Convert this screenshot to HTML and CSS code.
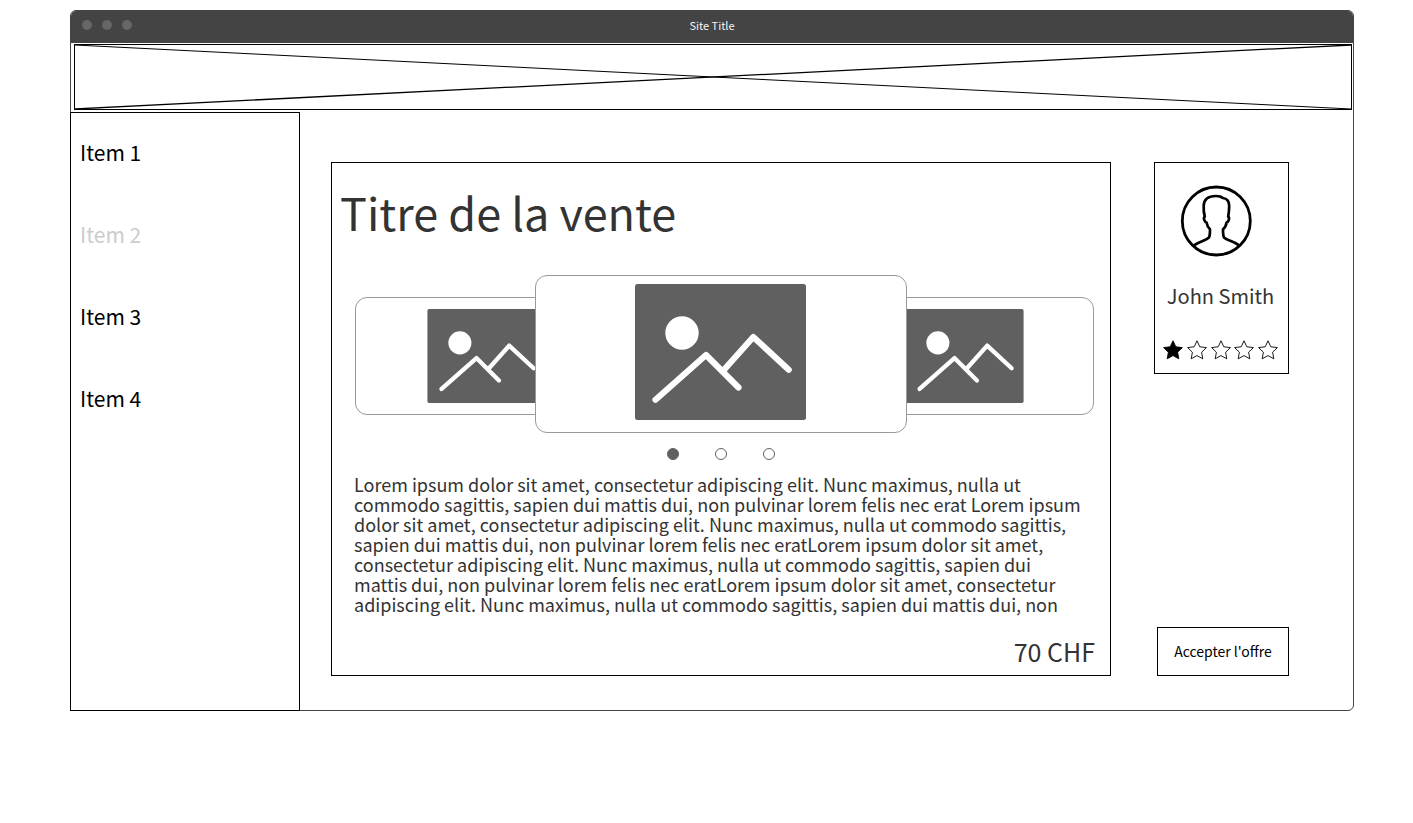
FILE: index.html
```html
<!DOCTYPE html>
<html lang="fr">
<head>
<meta charset="utf-8">
<meta name="viewport" content="width=device-width, initial-scale=1">
<title>Site Title</title>
<link rel="stylesheet" href="styles.css">
</head>
<body>
<svg class="defs" aria-hidden="true">
  <symbol id="photo" viewBox="0 0 171 136">
    <rect width="171" height="136" rx="2.5" fill="#606060"/>
    <circle cx="47" cy="49" r="16.7" fill="#fff"/>
    <path d="M20.5 115.7 71 71l32.5 32.5M87.5 87.5 118.3 53l35.4 32.7" fill="none" stroke="#fff" stroke-width="6.2" stroke-linecap="round" stroke-linejoin="round"/>
  </symbol>
  <symbol id="star" viewBox="0 0 20 20">
    <path d="M10 .8 12.8 6.8 19.4 7.6 14.6 12.2 15.8 18.8 10 15.6 4.2 18.8 5.4 12.2.6 7.6 7.2 6.8Z" stroke="#000" stroke-width=".9"/>
  </symbol>
</svg>
<div class="window">
  <header class="titlebar">
    <div class="lights"><span class="light"></span><span class="light"></span><span class="light"></span></div>
    <div class="site-title">Site Title</div>
  </header>
  <svg class="banner" viewBox="0 0 100 100" preserveAspectRatio="none" aria-hidden="true">
    <path class="thin" d="M0 0 100 100"/>
    <path class="thick" d="M0 100 100 0"/>
  </svg>
  <div class="content">
    <nav class="sidebar">
      <a class="item" href="#">Item 1</a>
      <a class="item muted" href="#">Item 2</a>
      <a class="item" href="#">Item 3</a>
      <a class="item" href="#">Item 4</a>
    </nav>
    <main class="main">
      <article class="sale">
        <h1 class="sale-title">Titre de la vente</h1>
        <div class="carousel">
          <div class="slide slide-prev"><svg class="photo"><use href="#photo"/></svg></div>
          <div class="slide slide-current"><svg class="photo"><use href="#photo"/></svg></div>
          <div class="slide slide-next"><svg class="photo"><use href="#photo"/></svg></div>
        </div>
        <div class="dots">
          <button class="dot active" type="button" aria-label="Image 1"></button>
          <button class="dot" type="button" aria-label="Image 2"></button>
          <button class="dot" type="button" aria-label="Image 3"></button>
        </div>
        <p class="description">Lorem ipsum dolor sit amet, consectetur adipiscing elit. Nunc maximus, nulla ut commodo sagittis, sapien dui mattis dui, non pulvinar lorem felis nec erat Lorem ipsum dolor sit amet, consectetur adipiscing elit. Nunc maximus, nulla ut commodo sagittis, sapien dui mattis dui, non pulvinar lorem felis nec eratLorem ipsum dolor sit amet, consectetur adipiscing elit. Nunc maximus, nulla ut commodo sagittis, sapien dui mattis dui, non pulvinar lorem felis nec eratLorem ipsum dolor sit amet, consectetur adipiscing elit. Nunc maximus, nulla ut commodo sagittis, sapien dui mattis dui, non</p>
        <p class="price">70 CHF</p>
      </article>
      <aside class="side">
        <section class="profile">
          <svg class="avatar" viewBox="0 0 72 72" fill="none" stroke="#000" aria-hidden="true">
            <circle cx="36.3" cy="36" r="34" stroke-width="2.8"/>
            <path d="M13.8 60.3C20 56 26 55.500 29 52.500C30 50.500 30 47 30 44.200C28 42.500 27 40.500 26.600 37.600C24.500 37 23 33 24.800 31.700C23.700 28 23.500 24 23.700 20.500C24 14 29 11 36 11C39.500 11 41.500 11.800 42.800 13C47.500 13.500 49.200 17 49.200 21C49.200 25 48.800 28 48.200 31.700C50 33 48.600 37 46.500 37.600C46.200 40.500 45 42.500 43 44.200C43 47 43 50.500 44 52.500C47 55.500 53 56 59 60.300" stroke-width="2.700" stroke-linejoin="round"/>
          </svg>
          <div class="name">John Smith</div>
          <div class="stars" role="img" aria-label="1 / 5">
            <svg class="star full"><use href="#star"/></svg>
            <svg class="star"><use href="#star"/></svg>
            <svg class="star"><use href="#star"/></svg>
            <svg class="star"><use href="#star"/></svg>
            <svg class="star"><use href="#star"/></svg>
          </div>
        </section>
        <button class="accept" type="button">Accepter l'offre</button>
      </aside>
    </main>
  </div>
</div>
</body>
</html>
```
FILE: styles.css
```css
* { box-sizing: border-box; }

body {
  margin: 0;
  padding: 10px 59px 10px 70px;
  background: #fff;
  color: #333;
  font-family: "Noto Sans CJK SC", "Noto Sans", sans-serif;
}

.defs { display: none; }

.window {
  border: 1px solid #444;
  border-radius: 6px 6px 6px 0;
}

.titlebar {
  display: grid;
  grid-template-columns: 1fr auto 1fr;
  align-items: center;
  padding: 0 11px 4px;
  height: 32px;
  border-radius: 5px 5px 0 0;
  background: #444;
}

.lights { display: flex; gap: 10px; }

.light {
  width: 10px;
  height: 10px;
  border-radius: 50%;
  background: #666;
}

.site-title {
  color: #f4f4f4;
  font-size: 11px;
  line-height: 16px;
}

.banner {
  display: block;
  width: calc(100% - 4px);
  height: 66px;
  margin: 1px 1px 2px 3px;
  border: 1px solid #000;
}

.banner path {
  fill: none;
  stroke: #000;
  vector-effect: non-scaling-stroke;
}

.thin { stroke-width: 1px; }
.banner .thick { stroke-width: 1.3px; }

.content { display: flex; }

.sidebar {
  display: flex;
  flex: 0 0 230px;
  flex-direction: column;
  gap: 50px;
  margin: 0 0 -1px -1px;
  padding: 23px 9px;
  border: 1px solid #000;
}

.item {
  color: #000;
  font-size: 21px;
  line-height: 32px;
  text-decoration: none;
}

.item.muted { color: #ccc; }

.main {
  display: flex;
  flex: 1;
  gap: 43px;
  min-width: 0;
  padding: 50px 64px 34px 31px;
}

.sale {
  flex: 1;
  min-width: 0;
  padding: 19px 15px 4px 23px;
  border: 1px solid #000;
}

.sale-title {
  margin: 0 0 33px -15px;
  font-size: 45px;
  font-weight: 400;
  line-height: 60px;
}

.carousel {
  display: grid;
  grid-template-columns: 180fr 372fr 187fr;
  align-items: end;
  margin-right: 1px;
}

.slide {
  display: flex;
  align-items: center;
  justify-content: center;
  height: 118px;
  margin-bottom: 18px;
  border: 1px solid #999;
  border-radius: 12px;
  background: #fff;
}

.slide-prev { margin-right: -83px; }
.slide-next { margin-left: -72px; }

.slide-current {
  z-index: 1;
  height: 158px;
  margin-bottom: 0;
  padding: 0 2px 4px 0;
}

.photo { width: 119px; height: 94px; }
.slide-current .photo { width: 171px; height: 136px; }

.dots {
  display: flex;
  justify-content: center;
  gap: 36px;
  margin: 15px 0 14px;
  padding-right: 9px;
}

.dot {
  width: 12px;
  height: 12px;
  padding: 0;
  border: 1px solid #606060;
  border-radius: 50%;
  background: #fff;
}

.dot.active { background: #606060; }

.description {
  margin: 0 13px 17px -1px;
  font-size: 18px;
  line-height: 20px;
}

.price {
  margin: 0;
  font-size: 25px;
  line-height: 40px;
  text-align: right;
}

.side {
  display: flex;
  flex: 0 0 135px;
  flex-direction: column;
  align-items: flex-end;
  justify-content: space-between;
}

.profile {
  width: 100%;
  padding: 22px 10px 13px 8px;
  border: 1px solid #000;
}

.avatar {
  display: block;
  width: 72px;
  height: 72px;
  margin-left: 17px;
}

.name {
  margin: 23px 0 28px;
  font-size: 20px;
  line-height: 32px;
  text-align: center;
  white-space: nowrap;
}

.stars { display: flex; justify-content: space-between; }

.star { width: 20px; height: 20px; fill: #fff; }
.star.full { fill: #000; }

.accept {
  width: 132px;
  height: 49px;
  padding: 0 0 2px;
  border: 1px solid #000;
  background: #fff;
  color: #000;
  font: inherit;
  font-size: 14px;
  white-space: nowrap;
}
```
